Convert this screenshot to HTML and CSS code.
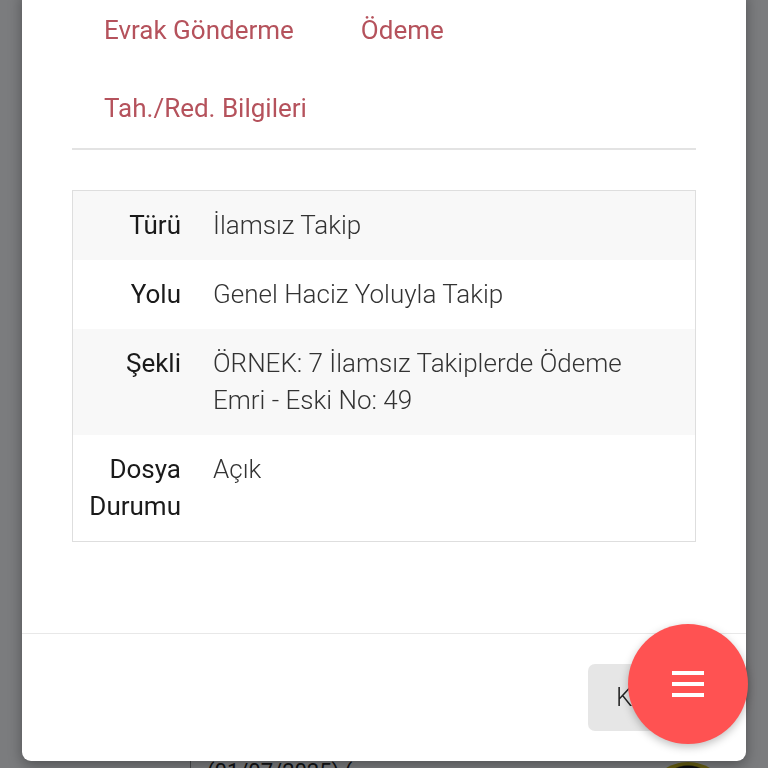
FILE: index.html
```html
<!DOCTYPE html>
<html lang="tr">
<head>
<meta charset="utf-8">
<title>Takip Detayı</title>
<link rel="stylesheet" href="styles.css">
</head>
<body>
<div class="page">
  <div class="page-row">
    <div class="page-cell page-cell-a"></div>
    <div class="page-cell page-cell-b">(01/07/2025) (</div>
    <div class="page-cell page-cell-c"><span class="avatar"></span></div>
  </div>
</div>

<div class="backdrop">
  <div class="modal">
    <div class="modal-body">
      <nav class="tabs">
        <a class="tab">Evrak Gönderme</a>
        <a class="tab">Ödeme</a>
        <a class="tab">Tah./Red. Bilgileri</a>
      </nav>
      <div class="info-table">
        <div class="row odd"><div class="label">Türü</div><div class="value">İlamsız Takip</div></div>
        <div class="row"><div class="label">Yolu</div><div class="value">Genel Haciz Yoluyla Takip</div></div>
        <div class="row odd"><div class="label">Şekli</div><div class="value">ÖRNEK: 7 İlamsız Takiplerde Ödeme Emri - Eski No: 49</div></div>
        <div class="row"><div class="label">Dosya Durumu</div><div class="value">Açık</div></div>
      </div>
    </div>
    <div class="modal-footer">
      <button class="btn">Kapat</button>
    </div>
  </div>
</div>

<button class="fab" aria-label="Menü">
  <svg width="34" height="30" viewBox="0 0 34 30"><rect x="1" y="2" width="32" height="4" fill="#fff"/><rect x="1" y="13" width="32" height="4" fill="#fff"/><rect x="1" y="24" width="32" height="4" fill="#fff"/></svg>
</button>
</body>
</html>
```
FILE: styles.css
```css
* { box-sizing: border-box; }
html, body { margin: 0; height: 768px; overflow: hidden; }
body {
  font-family: Roboto, "Noto Sans", sans-serif;
  background: #fff;
}
.page {
  height: 768px;
  display: flex;
  flex-direction: column;
  justify-content: flex-end;
  overflow: hidden;
}
.page-row {
  display: flex;
  height: 8px;
  flex: none;
}
.page-cell { border-left: 1px solid #999; }
.page-cell-a { width: 190px; border-left: none; }
.page-cell-b {
  width: 255px;
  padding-left: 16px;
  font-size: 22px;
  line-height: 22px;
  color: #222;
  padding-top: 1px;
  overflow: visible;
}
.page-cell-c { flex: 1; border-left: none; display: flex; padding-left: 200px; }
.avatar {
  width: 86px; height: 86px; border-radius: 50%;
  background: radial-gradient(circle at 50% 40%, #1b1b1b 45%, #d4c01d 47%);
  margin-top: 2px;
  flex: none;
}
.backdrop {
  position: fixed;
  inset: 0;
  background: rgba(2, 3, 8, 0.52);
  display: flex;
  flex-direction: column;
  justify-content: flex-end;
  padding: 0 22px 7px 22px;
}
.modal {
  background: #fff;
  border-radius: 0 0 9px 9px;
  box-shadow: 0 4px 14px rgba(0,0,0,0.35);
}
.modal-body {
  padding: 0 50px 91px 50px;
}
.tabs {
  display: flex;
  flex-wrap: wrap;
  border-bottom: 2px solid #e3e3e3;
  width: 624px;
  padding-right: 150px;
}
.tab {
  padding: 20px 35px 21px 32px;
  font-size: 26px;
  line-height: 37px;
  color: #b5525c;
  text-decoration: none;
}
.info-table {
  margin-top: 40px;
  border: 1px solid #dedede;
}
.row {
  display: grid;
  grid-template-columns: 124px 1fr;
  background: #fff;
}
.row.odd { background: #f8f8f8; }
.label, .value {
  padding: 16px;
  font-size: 26px;
  line-height: 37px;
}
.label {
  text-align: right;
  font-weight: 400;
  color: #1a1a1a;
}
.value {
  font-weight: 300;
  color: #333;
}
.modal-footer {
  border-top: 1px solid #e8e8e8;
  padding: 30px 35px 30px 40px;
  display: flex;
  justify-content: flex-end;
}
.btn {
  font-family: inherit;
  font-size: 26px;
  line-height: 37px;
  font-weight: 300;
  color: #222;
  background: #e6e6e6;
  border: none;
  border-radius: 7px;
  padding: 15px 28px;
}
.fab {
  position: fixed;
  left: 628px;
  top: 624px;
  width: 120px;
  height: 120px;
  border-radius: 50%;
  border: none;
  background: #ff5252;
  box-shadow: 0 3px 8px rgba(0,0,0,0.25);
  display: flex;
  align-items: center;
  justify-content: center;
  padding: 0;
}
```
